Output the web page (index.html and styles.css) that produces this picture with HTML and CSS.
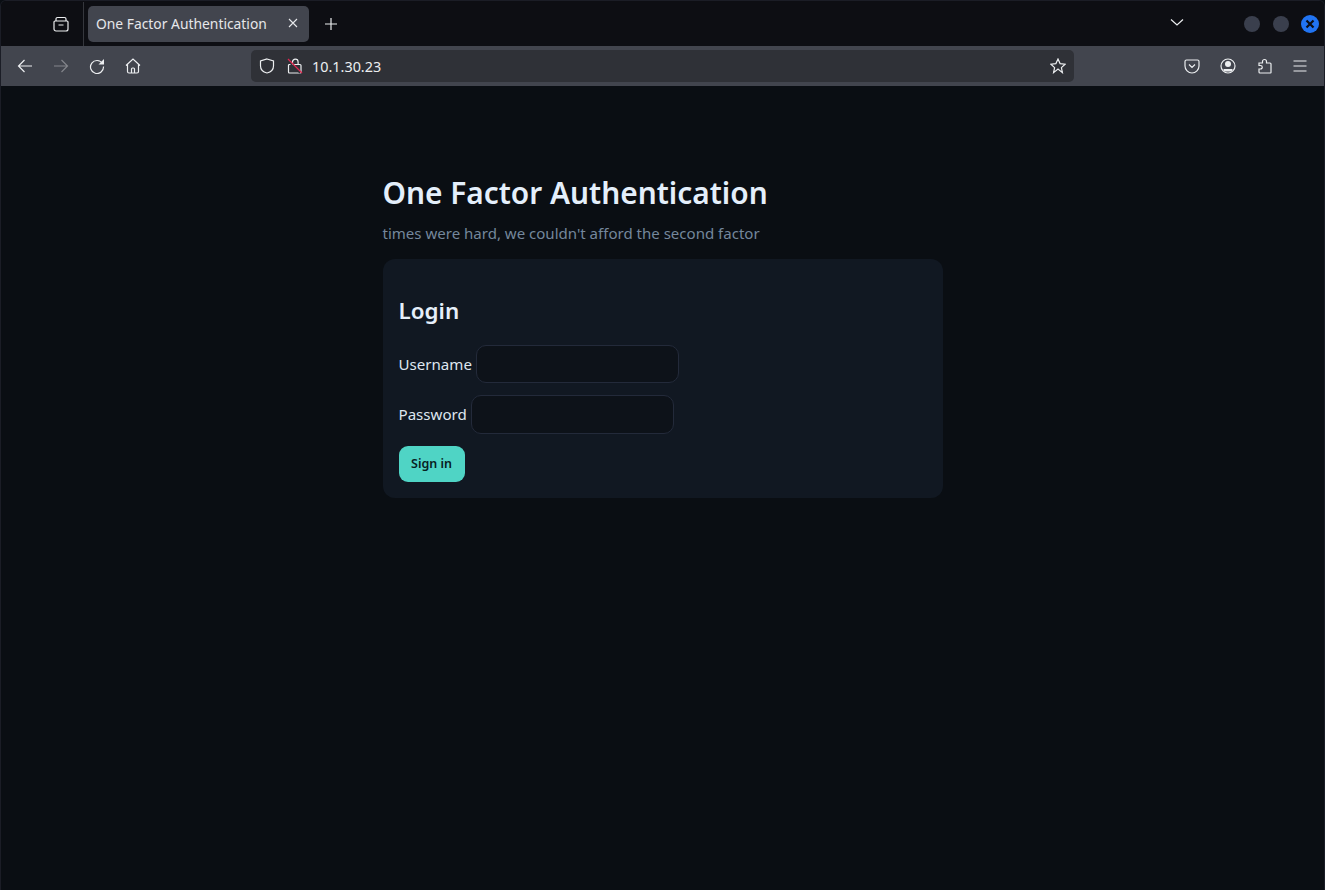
FILE: index.html
```html
<!DOCTYPE html>
<html lang="en">
<head>
<meta charset="utf-8">
<title>One Factor Authentication</title>
<link rel="stylesheet" href="styles.css">
</head>
<body>
<div class="window">
  <header class="tabbar">
    <div class="tabbar-left">
      <svg class="icon" viewBox="0 0 16 16"><path d="M2 5h12a1 1 0 0 1 1 1v7a2 2 0 0 1-2 2H3a2 2 0 0 1-2-2V6a1 1 0 0 1 1-1zM3 5V3a1.500 1.500 0 0 1 1.500-1.500h7A1.500 1.500 0 0 1 13 3v2M5.500 9h5"/></svg>
    </div>
    <div class="tab">
      <span class="tab-title">One Factor Authentication</span>
      <svg class="tab-close" viewBox="0 0 10 10"><path d="M1 1l8 8M9 1l-8 8"/></svg>
    </div>
    <svg class="icon newtab" viewBox="0 0 16 16"><path d="M8 2v12M2 8h12"/></svg>
    <div class="tabbar-space"></div>
    <svg class="icon chevron" viewBox="0 0 16 16"><path d="M2 4.500L8 10l6-5.500"/></svg>
    <div class="winbtns">
      <span class="winbtn"></span>
      <span class="winbtn"></span>
      <span class="winbtn close"><svg viewBox="0 0 10 10"><path d="M1.500 1.500l7 7M8.500 1.500l-7 7"/></svg></span>
    </div>
  </header>
  <nav class="toolbar">
    <div class="nav-group">
      <svg class="icon" viewBox="0 0 16 16"><path d="M15 8H1.500M7.500 2L1.500 8l6 6"/></svg>
      <svg class="icon dim" viewBox="0 0 16 16"><path d="M1 8h13.500M8.500 2l6 6-6 6"/></svg>
      <svg class="icon" viewBox="0 0 16 16"><path d="M13.500 5.500A6.500 6.500 0 1 0 14.500 8.500"/><path class="solid" d="M15 1v5.500H9.500z"/></svg>
      <svg class="icon" viewBox="0 0 16 16"><path d="M1 7.500L8 1l7 6.500M2.500 6.500v7a1.500 1.500 0 0 0 1.500 1.500h8a1.500 1.500 0 0 0 1.500-1.500v-7M6.500 15v-4a1 1 0 0 1 1-1h1a1 1 0 0 1 1 1v4"/></svg>
    </div>
    <div class="urlbar">
      <svg class="icon" viewBox="0 0 16 16"><path d="M8 1l6.500 2v5c0 3.500-2.500 6-6.500 7-4-1-6.500-3.500-6.500-7V3z"/></svg>
      <span class="lock">
        <svg class="icon" viewBox="0 0 16 16"><path d="M5.500 6.500V4a2.800 2.800 0 0 1 5.600 0v2.500M2.500 6.500h10.500a1 1 0 0 1 1 1V14a1 1 0 0 1-1 1H2.500a1 1 0 0 1-1-1V7.500a1 1 0 0 1 1-1z"/><path class="gap" d="M0 2l13 13"/><path class="strike" d="M1 1l14 14"/></svg>
      </span>
      <span class="url">10.1.30.23</span>
      <svg class="icon star" viewBox="0 0 16 16"><path d="M8 1l2.100 4.600 5 .6-3.700 3.400 1 5L8 11.100 3.600 14.600l1-5L.9 6.200l5-.6z"/></svg>
    </div>
    <div class="nav-group right">
      <svg class="icon" viewBox="0 0 16 16"><path d="M2.500 2h11A1.500 1.500 0 0 1 15 3.500V8a7 7 0 0 1-14 0V3.500A1.500 1.500 0 0 1 2.500 2zM5 6.500l3 3 3-3"/></svg>
      <svg class="icon" viewBox="0 0 16 16"><circle cx="8" cy="8" r="7"/><circle class="solid" cx="8" cy="6" r="3"/><path class="solid" d="M3.500 11h9v1.500L11 13.500H5l-1.500-1z"/></svg>
      <svg class="icon" viewBox="0 0 16 16"><path d="M3 5h3.500V3.500a2 2 0 0 1 4 0V5H14a1 1 0 0 1 1 1v8.500a.5.5 0 0 1-.5.5H4a1 1 0 0 1-1-1v-3h1.500a1.500 1.500 0 0 0 0-3.500H3z"/></svg>
      <svg class="icon" viewBox="0 0 16 16"><path d="M1.500 3h13M1.500 8h13M1.500 13h13"/></svg>
    </div>
  </nav>
  <main class="page">
    <h1 class="title">One Factor Authentication</h1>
    <p class="subtitle">times were hard, we couldn't afford the second factor</p>
    <section class="card">
      <h2 class="card-title">Login</h2>
      <form class="form">
        <div class="row"><label class="label" for="u">Username</label> <input id="u" class="field" type="text"></div>
        <div class="row"><label class="label" for="p">Password</label> <input id="p" class="field" type="password"></div>
        <button class="btn" type="button">Sign in</button>
      </form>
    </section>
  </main>
</div>
</body>
</html>
```
FILE: styles.css
```css
* { box-sizing: border-box; }
html, body { margin: 0; height: 100%; }
body { background: #0a0e13; font-family: "Noto Sans", sans-serif; color: #e6edf6; }
.window { height: 890px; display: flex; flex-direction: column; overflow: hidden; border: 1px solid #1b1d26; border-bottom: 0; border-radius: 6px 6px 0 0; }
.icon { width: 16px; height: 16px; fill: none; stroke: #eceef0; stroke-width: 1.2; flex: none; display: block; }
.icon .solid { fill: #eceef0; stroke: none; }
.icon.dim { stroke: #83858b; }
.tabbar { height: 45px; background: #0d0e13; display: flex; align-items: center; flex: none; }
.tabbar-left { width: 83px; height: 44px; border-right: 1px solid #35373d; display: flex; align-items: center; padding-left: 52px; }
.tab { width: 221px; height: 36px; margin: 0 0 0 4px; background: #42454e; border-radius: 5px; display: flex; align-items: center; padding: 0 11px 0 8px; font-size: 13.85px; color: #e6e7ea; }
.tab-title { flex: 1; white-space: nowrap; }
.tab-close { width: 10px; height: 10px; fill: none; stroke: #e6e7ea; stroke-width: 1.1; margin-top: -1px; }
.newtab { margin-left: 14px; }
.tabbar-space { flex: 1; }
.chevron { margin: -1px 59px 0 0; }
.winbtns { display: flex; gap: 13px; align-items: center; margin-right: 5px; }
.winbtn { width: 16px; height: 16px; border-radius: 50%; background: #3a3f4d; display: flex; align-items: center; justify-content: center; }
.winbtn.close { width: 18px; height: 18px; background: #2174f2; margin-left: -1px; }
.winbtn.close svg { width: 10px; height: 10px; fill: none; stroke: #0d0e13; stroke-width: 2.2; }
.toolbar { height: 40px; background: #42454e; display: flex; align-items: center; flex: none; padding-bottom: 1px; }
.nav-group { display: flex; align-items: center; gap: 20px; padding-left: 16px; width: 250px; }
.nav-group.right { padding-left: 110px; flex: 1; width: auto; }
.urlbar { width: 823px; height: 32px; background: #2f3137; border-radius: 5px; display: flex; align-items: center; padding: 0 8px; }
.lock { margin-left: 12px; }
.strike { stroke: #e0254f; }
.icon .gap { stroke: #2f3137; stroke-width: 1.4; }
.url { margin: 1px 0 0 9px; font-size: 14.4px; color: #eceef0; flex: 1; }
.page { flex: 1; width: 560px; margin-left: 381.5px; padding-top: 87px; }
.title { margin: 0; font-size: 29.85px; line-height: 40px; font-weight: 600; color: #e4effb; }
.subtitle { margin: 8px 0 0; font-size: 15.04px; line-height: 24px; color: #74879c; }
.card { margin-top: 14px; height: 238.5px; background: #111822; border-radius: 12px; padding: 34px 16px 16px; }
.card-title { margin: 0 0 16px; font-size: 22.4px; line-height: 36px; font-weight: 600; color: #e6effa; }
.form { display: flex; flex-direction: column; gap: 12px; }
.row { font-size: 15.1px; line-height: 38.4px; height: 38.4px; color: #dfe6ef; }
.field { width: 203px; height: 38.4px; background: #0d1219; border: 1px solid #232a3a; border-radius: 10px; vertical-align: top; }
.btn { align-self: flex-start; width: 66px; height: 36px; background: #4fd4c5; color: #08201f; border: 0; border-radius: 9px; font: 600 12.5px "Noto Sans", sans-serif; }
```
